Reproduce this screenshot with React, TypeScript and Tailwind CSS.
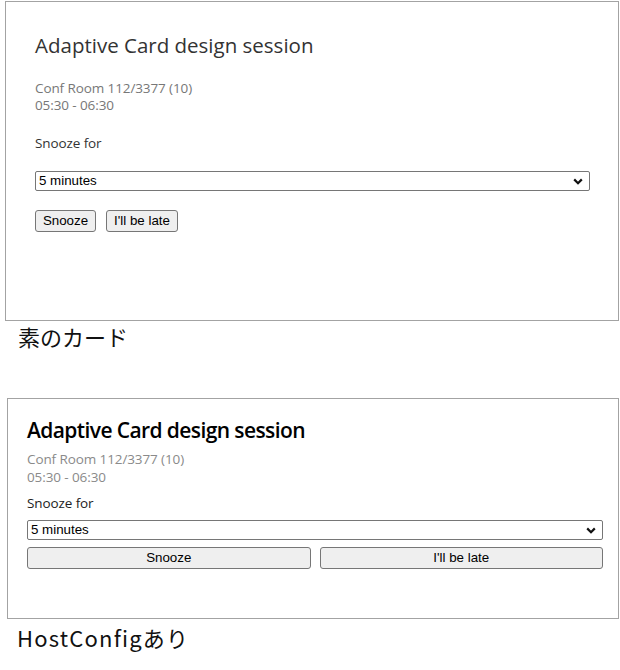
import React from "react";

const ui = { fontFamily: '"Open Sans", "Noto Sans", sans-serif' };
const ctl = { fontFamily: '"Liberation Sans", Arial, sans-serif' };
const jp = { fontFamily: '"Noto Sans CJK JP", "Noto Sans", sans-serif' };

function Chevron() {
  return (
    <svg width="10" height="7" viewBox="0 0 10 7" className="shrink-0">
      <path d="M1.2 1.4 L5 5.2 L8.8 1.4" fill="none" stroke="#111" strokeWidth="2.2" />
    </svg>
  );
}

function Select({ className }: { className: string }) {
  return (
    <div
      className={`flex items-center justify-between border border-[#767676] rounded-[2px] bg-white pl-[3px] pr-[6px] text-[13.33px] text-black ${className}`}
      style={ctl}
    >
      <span>5 minutes</span>
      <Chevron />
    </div>
  );
}

function Btn({ label, className }: { label: string; className: string }) {
  return (
    <div
      className={`flex items-center justify-center border border-[#767676] rounded-[3px] bg-[#efefef] text-[13.33px] text-black ${className}`}
      style={ctl}
    >
      {label}
    </div>
  );
}

export default function App() {
  return (
    <div className="w-[620px] h-[670px] bg-white overflow-hidden relative">
      {/* plain card */}
      <div className="ml-[5px] mt-[1px] w-[614px] h-[320px] border border-[#a3a3a3] pl-[29px] pr-[28px]" style={ui}>
        <div className="mt-[30px] text-[20.5px] leading-[26px] text-[#333]">
          Adaptive Card design session
        </div>
        <div className="mt-[22px] text-[13.5px] leading-[17px] text-[#777] tracking-[-0.1px]">
          <div>Conf Room 112/3377 (10)</div>
          <div>05:30 - 06:30</div>
        </div>
        <div className="mt-[21px] text-[13.5px] leading-[17px] text-[#333] tracking-[-0.1px]">Snooze for</div>
        <Select className="mt-[19px] h-[20px] w-[555px]" />
        <div className="mt-[19px] flex gap-[10px]">
          <Btn label="Snooze" className="w-[61px] h-[22px]" />
          <Btn label="I'll be late" className="w-[72px] h-[22px]" />
        </div>
      </div>
      <div className="ml-[18px] mt-[1px] text-[22px] leading-[28px] text-[#111]" style={jp}>
        素のカード
      </div>

      {/* card with host config */}
      <div className="ml-[7px] mt-[48px] w-[612px] h-[221px] border border-[#a3a3a3] pl-[19px] pr-[15px]" style={ui}>
        <div className="mt-[17px] text-[21px] leading-[28px] font-semibold text-black tracking-[-0.6px]">
          Adaptive Card design session
        </div>
        <div className="mt-[6px] text-[13.5px] leading-[18px] text-[#8a8a8a] tracking-[-0.1px]">
          <div>Conf Room 112/3377 (10)</div>
          <div>05:30 - 06:30</div>
        </div>
        <div className="mt-[8px] text-[13.5px] leading-[18px] text-[#222] tracking-[-0.1px]">Snooze for</div>
        <Select className="mt-[8px] h-[20px] w-[576px]" />
        <div className="mt-[7px] flex gap-[9px]">
          <Btn label="Snooze" className="flex-1 h-[22px]" />
          <Btn label="I'll be late" className="flex-1 h-[22px]" />
        </div>
      </div>
      <div className="ml-[17px] mt-[4px] text-[22px] leading-[28px] text-[#111] tracking-[1.2px]" style={jp}>
        HostConfigあり
      </div>
    </div>
  );
}
